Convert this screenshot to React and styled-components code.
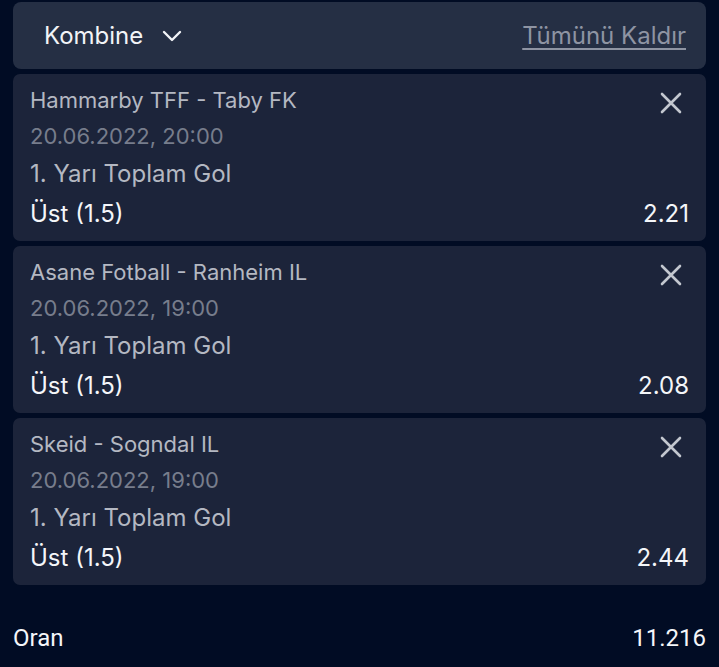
import React from "react";
import styled, { createGlobalStyle } from "styled-components";

const Global = createGlobalStyle`
  html, body { margin: 0; padding: 0; background: #010c24; }
  body { font-family: Inter, "Noto Sans", sans-serif; }
`;

const Page = styled.div`
  padding: 2px 13px 0 13px;
  display: flex;
  flex-direction: column;
  gap: 5px;
  min-height: 665px;
  box-sizing: border-box;
`;

const Header = styled.div`
  height: 67px;
  box-sizing: border-box;
  background: #252f44;
  border-radius: 8px;
  display: flex;
  align-items: center;
  justify-content: space-between;
  padding: 0 20px 0 31px;
`;

const Mode = styled.div`
  display: flex;
  align-items: center;
  gap: 19px;
  color: #f2f4f7;
  font-size: 24px;
`;

const ClearAll = styled.a`
  color: #8e94a3;
  font-size: 24px;
  text-decoration: underline;
  text-underline-offset: 4px;
  text-decoration-thickness: 1.5px;
  cursor: pointer;
`;

const Card = styled.div`
  background: #1c243a;
  border-radius: 7px;
  padding: 12px 17px 13px 17px;
  height: 167px;
  box-sizing: border-box;
  display: flex;
  flex-direction: column;
`;

const TopRow = styled.div`
  display: flex;
  justify-content: space-between;
  align-items: flex-start;
`;

const Line = styled.div`
  font-size: ${(p) => p.$size}px;
  line-height: 28px;
  color: ${(p) => p.$color};
  margin-top: ${(p) => p.$mt || 0}px;
  display: flex;
  justify-content: space-between;
  white-space: nowrap;
`;

const CloseBtn = styled.button`
  background: none;
  border: none;
  padding: 0;
  width: 28px;
  height: 28px;
  margin: 3px 4px 0 0;
  display: flex;
  align-items: center;
  justify-content: center;
  cursor: pointer;
`;

const Total = styled.div`
  margin-top: 33px;
  display: flex;
  justify-content: space-between;
  font-family: Roboto, sans-serif;
  font-size: 24px;
  line-height: 30px;
  color: #f4f6f9;
`;

const bets = [
  { match: "Hammarby TFF - Taby FK", date: "20.06.2022, 20:00", odd: "2.21" },
  { match: "Asane Fotball - Ranheim IL", date: "20.06.2022, 19:00", odd: "2.08" },
  { match: "Skeid - Sogndal IL", date: "20.06.2022, 19:00", odd: "2.44" },
];

const Chevron = () => (
  <svg width="20" height="14" viewBox="0 0 20 14" fill="none">
    <path d="M2 3l8 8 8-8" stroke="#f2f4f7" strokeWidth="2.4" strokeLinecap="round" strokeLinejoin="round" />
  </svg>
);

const XIcon = () => (
  <svg width="22" height="22" viewBox="0 0 22 22" fill="none">
    <path d="M2 2l18 18M20 2L2 20" stroke="#c3c7cf" strokeWidth="2.6" strokeLinecap="round" />
  </svg>
);

export default function App() {
  return (
    <>
      <Global />
      <Page>
        <Header>
          <Mode>
            Kombine <Chevron />
          </Mode>
          <ClearAll>Tümünü Kaldır</ClearAll>
        </Header>
        {bets.map((b) => (
          <Card key={b.match}>
            <TopRow>
              <Line $size={22} $color="#b4b8c2">{b.match}</Line>
              <CloseBtn aria-label="Kaldır">
                <XIcon />
              </CloseBtn>
            </TopRow>
            <Line $size={22} $color="#777d8c" $mt={5}>{b.date}</Line>
            <Line $size={24} $color="#b4b8c2" $mt={10}>1. Yarı Toplam Gol</Line>
            <Line $size={24} $color="#f4f6f9" $mt={12}>
              <span>Üst (1.5)</span>
              <span>{b.odd}</span>
            </Line>
          </Card>
        ))}
        <Total>
          <span>Oran</span>
          <span>11.216</span>
        </Total>
      </Page>
    </>
  );
}
